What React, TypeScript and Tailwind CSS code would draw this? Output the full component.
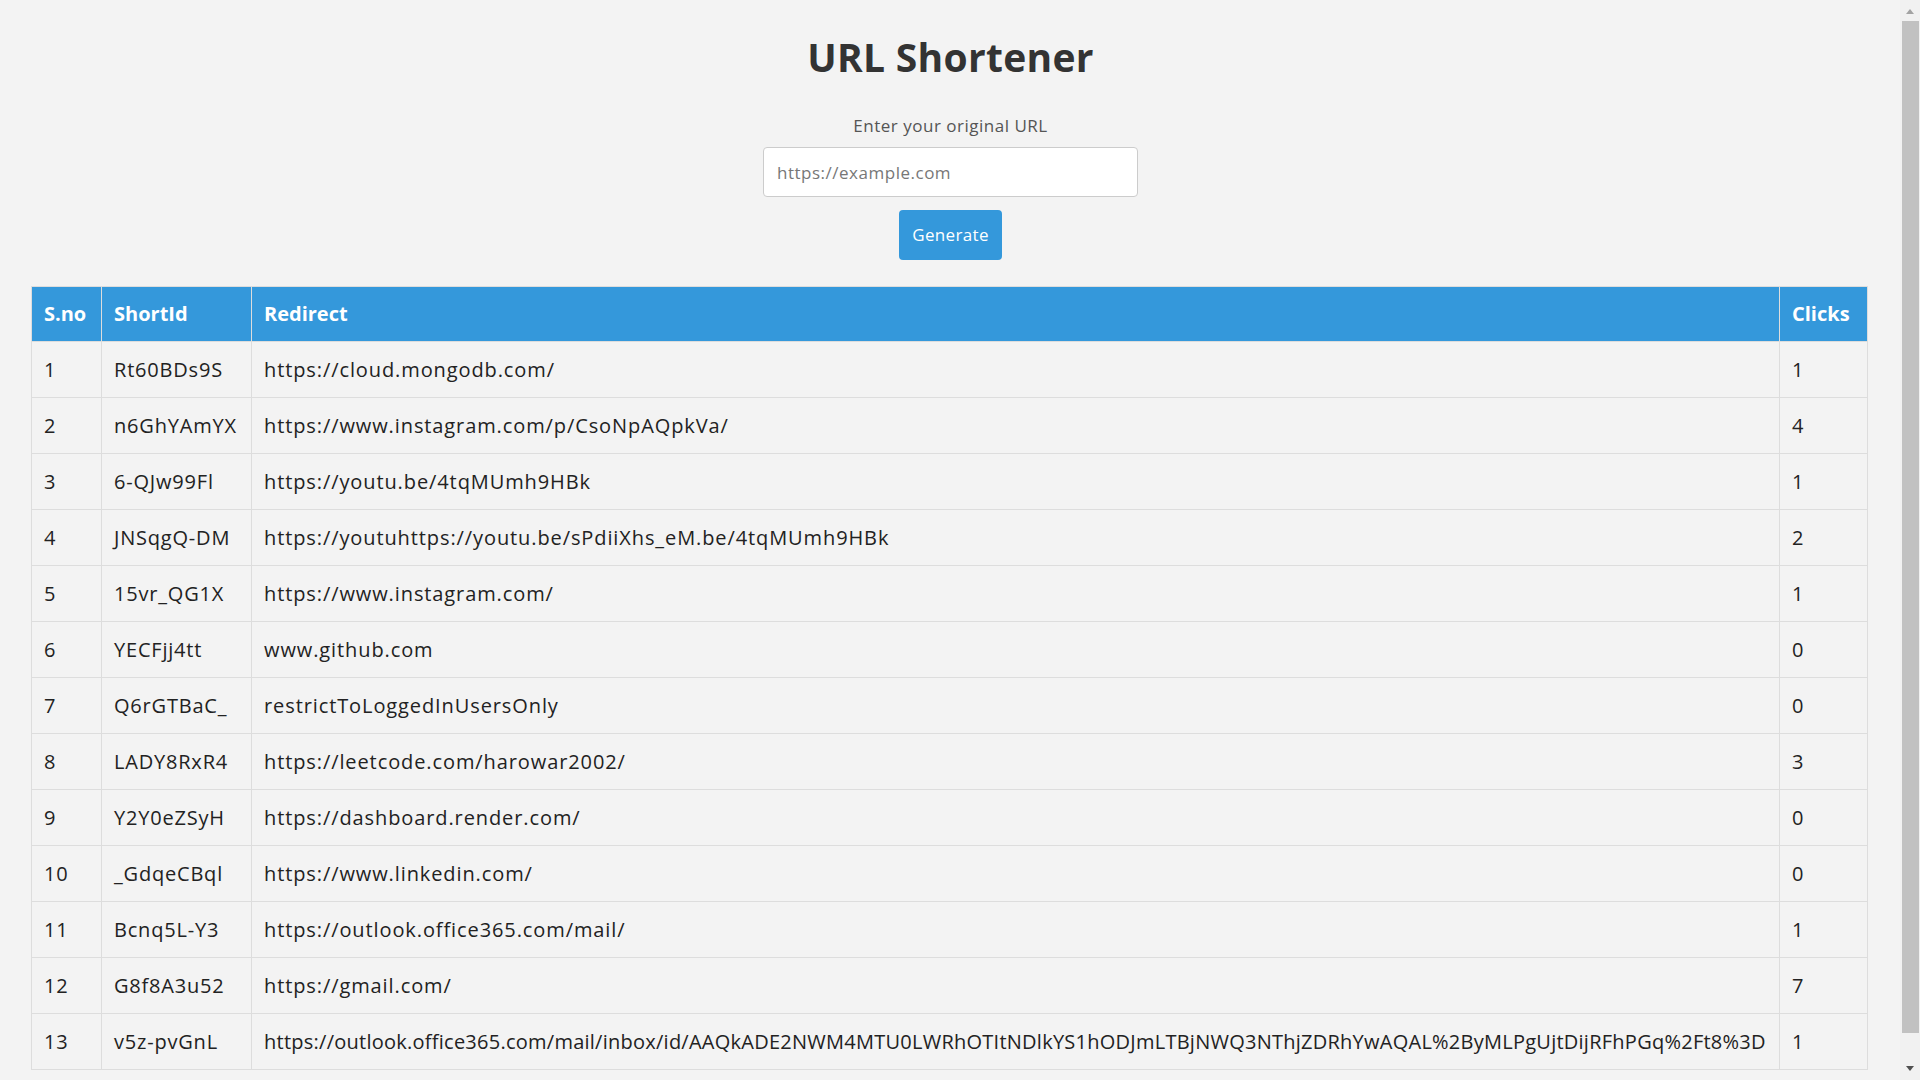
import React from "react";

const rows: [string, string, string, string][] = [
  ["1", "Rt60BDs9S", "https://cloud.mongodb.com/", "1"],
  ["2", "n6GhYAmYX", "https://www.instagram.com/p/CsoNpAQpkVa/", "4"],
  ["3", "6-QJw99Fl", "https://youtu.be/4tqMUmh9HBk", "1"],
  ["4", "JNSqgQ-DM", "https://youtuhttps://youtu.be/sPdiiXhs_eM.be/4tqMUmh9HBk", "2"],
  ["5", "15vr_QG1X", "https://www.instagram.com/", "1"],
  ["6", "YECFjj4tt", "www.github.com", "0"],
  ["7", "Q6rGTBaC_", "restrictToLoggedInUsersOnly", "0"],
  ["8", "LADY8RxR4", "https://leetcode.com/harowar2002/", "3"],
  ["9", "Y2Y0eZSyH", "https://dashboard.render.com/", "0"],
  ["10", "_GdqeCBql", "https://www.linkedin.com/", "0"],
  ["11", "Bcnq5L-Y3", "https://outlook.office365.com/mail/", "1"],
  ["12", "G8f8A3u52", "https://gmail.com/", "7"],
  [
    "13",
    "v5z-pvGnL",
    "https://outlook.office365.com/mail/inbox/id/AAQkADE2NWM4MTU0LWRhOTItNDlkYS1hODJmLTBjNWQ3NThjZDRhYwAQAL%2ByMLPgUjtDijRFhPGq%2Ft8%3D",
    "1",
  ],
];

export default function App() {
  return (
    <div className="relative min-h-screen w-full bg-[#f3f3f3] font-['Open_Sans',sans-serif] text-[#333] pb-[20px]">
      <div className="w-[1901px] flex flex-col items-center">
        <h1 className="mt-[34px] h-[46px] leading-[46px] text-[39px] tracking-[0.3px] font-bold text-[#333]">
          URL Shortener
        </h1>
        <label className="mt-[34px] h-[24px] leading-[24px] text-[17px] tracking-[0.03em] text-[#555]">
          Enter your original URL
        </label>
        <input
          type="text"
          placeholder="https://example.com"
          className="mt-[9px] h-[50px] w-[375px] rounded-[4px] border border-[#ccc] bg-white px-[13px] text-[17px] tracking-[0.03em] text-[#333] placeholder:text-[#777] outline-none"
        />
        <button className="mt-[13px] h-[50px] w-[103px] rounded-[4px] bg-[#3498db] text-[17px] tracking-[0.02em] text-white">
          Generate
        </button>
        <table className="mt-[26px] self-start ml-[31px] w-[1836px] table-fixed border-collapse border border-[#ddd] text-left">
          <colgroup>
            <col className="w-[70px]" />
            <col className="w-[150px]" />
            <col className="w-[1528px]" />
            <col className="w-[88px]" />
          </colgroup>
          <thead>
            <tr className="bg-[#3498db] text-white">
              <th className="border border-[#ddd] px-[12px] py-[12px] text-[20px] leading-[30px] font-bold">S.no</th>
              <th className="border border-[#ddd] px-[12px] py-[12px] text-[20px] leading-[30px] font-bold">ShortId</th>
              <th className="border border-[#ddd] px-[12px] py-[12px] text-[20px] leading-[30px] font-bold">Redirect</th>
              <th className="border border-[#ddd] px-[12px] py-[12px] text-[20px] leading-[30px] font-bold">Clicks</th>
            </tr>
          </thead>
          <tbody>
            {rows.map((r) => {
              const isLong = r[2].length > 80;
              return (
                <tr key={r[0]} className="text-[#222]">
                  <td className="border border-[#ddd] px-[12px] py-[12px] text-[20px] leading-[31px] tracking-[0.04em] whitespace-nowrap">{r[0]}</td>
                  <td className="border border-[#ddd] px-[12px] py-[12px] text-[20px] leading-[31px] tracking-[0.04em] whitespace-nowrap">{r[1]}</td>
                  <td
                    className={
                      isLong
                        ? "border border-[#ddd] px-[12px] py-[12px] text-[20px] leading-[31px] tracking-[0.25px] whitespace-nowrap"
                        : "border border-[#ddd] px-[12px] py-[12px] text-[20px] leading-[31px] tracking-[0.045em] whitespace-nowrap"
                    }
                  >
                    {r[2]}
                  </td>
                  <td className="border border-[#ddd] px-[12px] py-[12px] text-[20px] leading-[31px] tracking-[0.04em] whitespace-nowrap">{r[3]}</td>
                </tr>
              );
            })}
          </tbody>
        </table>
      </div>

      {/* browser scrollbar */}
      <div className="fixed right-0 top-0 h-screen w-[20px] bg-[#f1f1f1] flex flex-col items-center">
        <div className="mt-[9px] h-0 w-0 border-x-[4.5px] border-b-[5px] border-x-transparent border-b-[#a3a3a3]" />
        <div className="mt-[7px] ml-[1px] h-[1012px] w-[17px] bg-[#c1c1c1]" />
        <div className="mt-[33px] h-0 w-0 border-x-[4.5px] border-t-[5px] border-x-transparent border-t-[#505050]" />
      </div>
    </div>
  );
}
